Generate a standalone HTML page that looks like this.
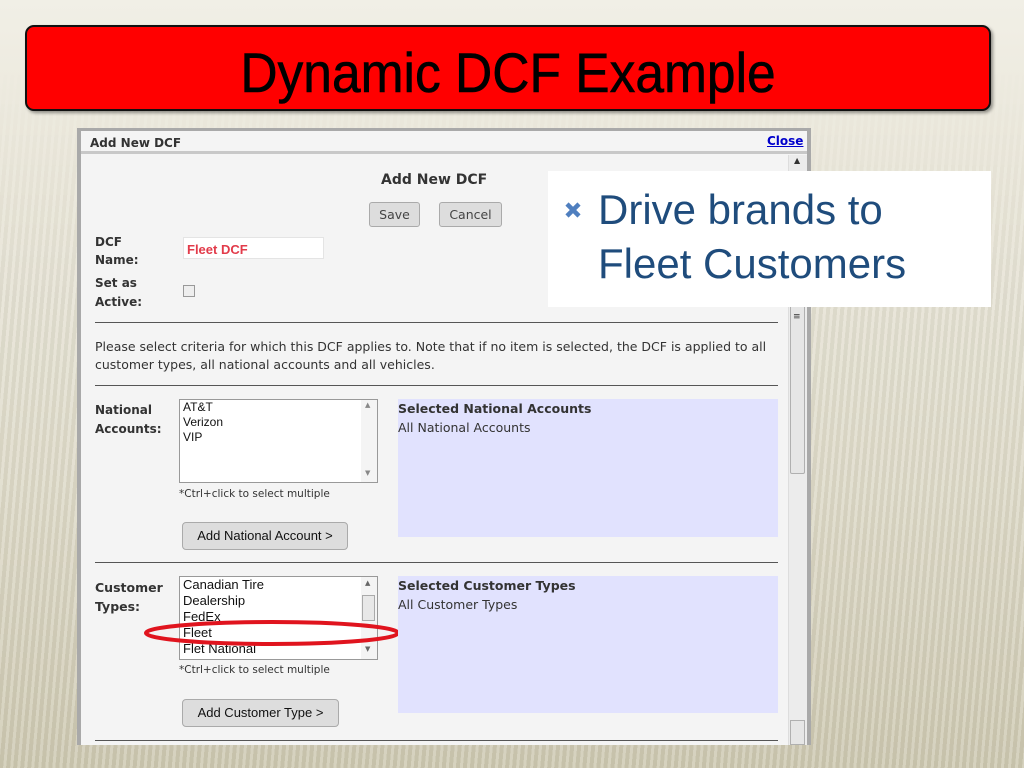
<!DOCTYPE html>
<html><head><meta charset="utf-8"><style>
*{margin:0;padding:0;box-sizing:border-box}
body{width:1024px;height:768px;overflow:hidden;position:relative;font-family:"DejaVu Sans","Liberation Sans",sans-serif;
background:linear-gradient(#f1efe6 0,#ece9dd 120px,#dcd8c6 500px,#cdc8b0 768px);}
.stripes{position:absolute;inset:0;background:repeating-linear-gradient(95deg,rgba(255,255,255,0.18) 0 3px,rgba(0,0,0,0.03) 3px 7px);
-webkit-mask:linear-gradient(rgba(0,0,0,0) 60px,rgba(0,0,0,1) 300px);}
.abs{position:absolute}
.title{left:25px;top:25px;width:966px;height:86px;background:#ff0000;border:2px solid #111;border-radius:9px;box-shadow:2px 2px 3px rgba(0,0,0,.4)}
.title span{position:absolute;left:0;right:0;top:18px;line-height:1;text-align:center;font-family:"Liberation Sans",sans-serif;font-size:56px;color:#000;transform:scaleX(0.92);-webkit-text-stroke:0.6px #000}
.dlg{left:77px;top:128px;width:734px;height:617px;background:#a9a9a9}
.inner{left:81px;top:131px;width:726px;height:614px;background:#f4f4f4}
.hdr{left:81px;top:131px;width:726px;height:23px;background:#f4f4f4;border-bottom:3px solid #c8c8c8}
.t{position:absolute;font-size:12px;color:#333}
.b{font-weight:bold}
.btn{position:absolute;background:#ddd;border:1px solid #aaa;border-radius:3px;font-size:12.5px;color:#444;text-align:center}
.hr{position:absolute;left:95px;width:683px;height:1px;background:#555}
.sel{position:absolute;background:#fff;border:1px solid #999;font-family:"Liberation Sans",sans-serif;font-size:12px;color:#111;line-height:15px;padding-left:3px}
.blue{position:absolute;left:398px;width:380px;background:#e1e2fe}
.wbtn{position:absolute;background:#ddd;border:1px solid #aaa;border-radius:4px;font-family:"Liberation Sans",sans-serif;font-size:13px;color:#111;text-align:center;line-height:26px}
.call{left:548px;top:171px;width:443px;height:136px;background:#fff}
.call div{position:absolute;left:50px;font-family:"Liberation Sans",sans-serif;font-size:42px;color:#1f4c7c}
</style></head><body>
<div class="stripes"></div>
<div class="abs title"><span>Dynamic DCF Example</span></div>
<div class="abs dlg"></div>
<div class="abs inner"></div>
<div class="abs hdr"></div>
<div class="t b" style="left:90px;top:136px">Add New DCF</div>
<div class="t b" style="left:767px;top:134px;color:#00c;text-decoration:underline">Close</div>
<div class="abs" style="left:788px;top:155px;width:19px;height:590px;background:#ececec;border-left:1px solid #ddd"></div>
<div class="abs" style="left:790px;top:172px;width:15px;height:302px;background:#e6e6e6;border:1px solid #b0b0b0;border-radius:2px"></div>
<div class="abs" style="left:790px;top:720px;width:15px;height:25px;background:#e6e6e6;border:1px solid #b0b0b0"></div>
<div class="t" style="left:793px;top:312px;font-size:9px">≡</div>
<div class="t" style="left:794px;top:156px;font-size:8px">▲</div>

<div class="t b" style="left:381px;top:172px;font-size:14px">Add New DCF</div>
<div class="btn" style="left:369px;top:202px;width:51px;height:25px;line-height:23px">Save</div>
<div class="btn" style="left:439px;top:202px;width:63px;height:25px;line-height:23px">Cancel</div>
<div class="t b" style="left:95px;top:233px;line-height:18px">DCF<br>Name:</div>
<div class="abs" style="left:183px;top:237px;width:141px;height:22px;background:#fff;border:1px solid #e4e4e4"></div>
<div class="t b" style="left:187px;top:242px;color:#e23b4a;font-family:'Liberation Sans',sans-serif;font-size:13px">Fleet DCF</div>
<div class="t b" style="left:95px;top:274px;line-height:19px">Set as<br>Active:</div>
<div class="abs" style="left:183px;top:285px;width:12px;height:12px;border:1px solid #999;background:#eee"></div>
<div class="hr" style="top:322px"></div>
<div class="t" style="left:95px;top:338px;line-height:18px;font-size:12.5px">Please select criteria for which this DCF applies to. Note that if no item is selected, the DCF is applied to all<br>customer types, all national accounts and all vehicles.</div>
<div class="hr" style="top:385px"></div>

<div class="t b" style="left:95px;top:401px;line-height:19px">National<br>Accounts:</div>
<div class="sel" style="left:179px;top:399px;width:199px;height:84px">AT&amp;T<br>Verizon<br>VIP</div>
<div class="abs" style="left:361px;top:400px;width:16px;height:82px;background:#f4f4f4"></div>
<div class="t" style="left:365px;top:401px;font-size:7px;color:#888">▲</div>
<div class="t" style="left:365px;top:469px;font-size:7px;color:#888">▼</div>
<div class="t" style="left:179px;top:488px;font-size:10.5px">*Ctrl+click to select multiple</div>
<div class="wbtn" style="left:182px;top:522px;width:166px;height:28px">Add National Account &gt;</div>
<div class="blue" style="top:399px;height:138px"></div>
<div class="t b" style="left:398px;top:401px;font-size:12.5px">Selected National Accounts</div>
<div class="t" style="left:398px;top:420px;font-size:12.5px">All National Accounts</div>
<div class="hr" style="top:562px"></div>

<div class="t b" style="left:95px;top:578px;line-height:19px;font-size:12.5px">Customer<br>Types:</div>
<div class="sel" style="left:179px;top:576px;width:199px;height:84px;font-size:13px;line-height:16px;overflow:hidden">Canadian Tire<br>Dealership<br>FedEx<br>Fleet<br>Flet National</div>
<div class="abs" style="left:361px;top:577px;width:16px;height:82px;background:#f4f4f4"></div>
<div class="abs" style="left:362px;top:595px;width:13px;height:26px;background:#e8e8e8;border:1px solid #aaa"></div>
<div class="t" style="left:365px;top:579px;font-size:7px;color:#666">▲</div>
<div class="t" style="left:365px;top:645px;font-size:7px;color:#666">▼</div>
<svg class="abs" style="left:0;top:0" width="1024" height="768"><ellipse cx="272" cy="633" rx="126" ry="11" fill="none" stroke="#e0141e" stroke-width="4"/></svg>
<div class="t" style="left:179px;top:664px;font-size:10.5px">*Ctrl+click to select multiple</div>
<div class="wbtn" style="left:182px;top:699px;width:157px;height:28px">Add Customer Type &gt;</div>
<div class="blue" style="top:576px;height:137px"></div>
<div class="t b" style="left:398px;top:578px;font-size:12.5px">Selected Customer Types</div>
<div class="t" style="left:398px;top:597px;font-size:12.5px">All Customer Types</div>
<div class="hr" style="top:740px"></div>

<div class="abs call">
<svg class="abs" style="left:16px;top:30px" width="18" height="18"><path d="M3 3L15 15M15 3L3 15" stroke="#4f7fbf" stroke-width="4.5"/></svg>
<div style="top:15px">Drive brands to</div>
<div style="top:69px">Fleet Customers</div>
</div>
</body></html>
